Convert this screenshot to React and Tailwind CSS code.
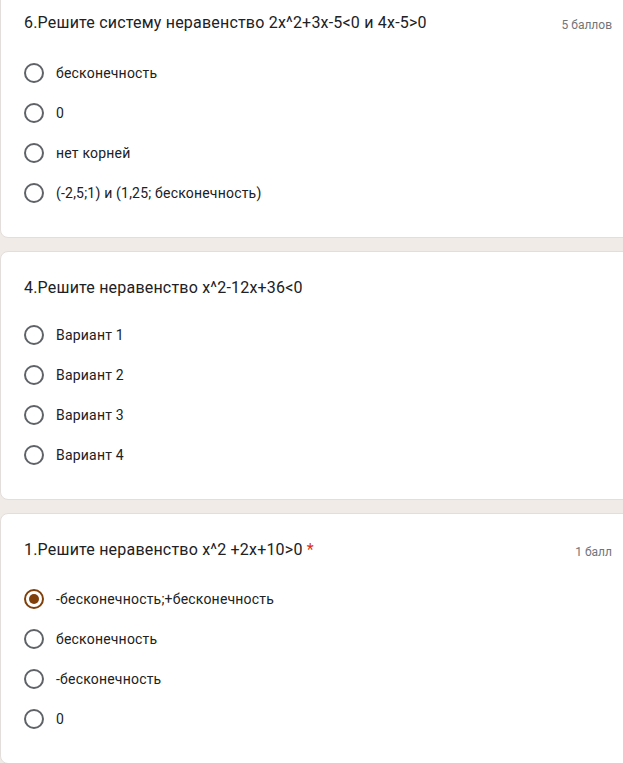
import React from "react";

const questions = [
  {
    title: "6.Решите систему неравенство 2x^2+3x-5<0 и 4x-5>0",
    points: "5 баллов",
    gap: "mt-[18px]",
    options: ["бесконечность", "0", "нет корней", "(-2,5;1) и (1,25; бесконечность)"],
  },
  {
    title: "4.Решите неравенство x^2-12x+36<0",
    gap: "mt-[15px]",
    options: ["Вариант 1", "Вариант 2", "Вариант 3", "Вариант 4"],
  },
  {
    title: "1.Решите неравенство x^2 +2x+10>0",
    required: true,
    points: "1 балл",
    gap: "mt-[17px]",
    selected: 0,
    options: ["-бесконечность;+бесконечность", "бесконечность", "-бесконечность", "0"],
  },
];

function Radio({ checked }) {
  if (checked) {
    return (
      <span className="flex h-5 w-5 shrink-0 items-center justify-center rounded-full border-2 border-[#80400b]">
        <span className="h-2.5 w-2.5 rounded-full bg-[#80400b]" />
      </span>
    );
  }
  return <span className="h-5 w-5 shrink-0 rounded-full border-2 border-[#5f6368]" />;
}

function QuestionCard({ q }) {
  return (
    <div className="w-[calc(100%+14px)] rounded-lg border border-[#e3dedb] bg-white pl-[23px] pr-6 py-6">
      <div className="flex items-start justify-between">
        <div className="text-base leading-6 tracking-[0.2px] text-[#202124]">
          {q.title}
          {q.required && <span className="text-[#d93025]"> *</span>}
        </div>
        {q.points && (
          <div className="pt-[6px] text-xs leading-4 text-[#70757a]">{q.points}</div>
        )}
      </div>
      <div className={q.gap}>
        {q.options.map((o, i) => (
          <div key={i} className="flex h-10 items-center gap-3">
            <Radio checked={q.selected === i} />
            <span className="text-sm tracking-[0.2px] text-[#202124]">{o}</span>
          </div>
        ))}
      </div>
    </div>
  );
}

export default function App() {
  return (
    <div
      className="h-[763px] w-full overflow-hidden bg-[#f1ebe8]"
      style={{ fontFamily: "Roboto, 'Noto Sans', Arial, sans-serif" }}
    >
      <div className="-mt-[14px] flex flex-col gap-[13px]">
        {questions.map((q, i) => (
          <QuestionCard key={i} q={q} />
        ))}
      </div>
    </div>
  );
}
